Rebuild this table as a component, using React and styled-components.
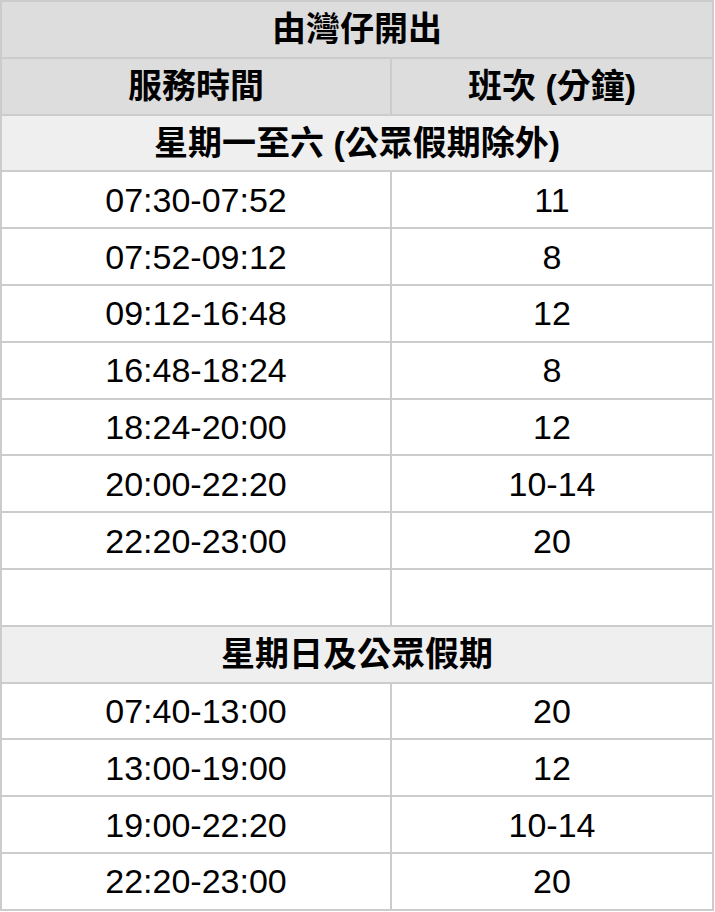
import styled, { createGlobalStyle } from "styled-components";

const GlobalStyle = createGlobalStyle`
  html, body {
    margin: 0;
    padding: 0;
    background: #ffffff;
  }
  body {
    font-family: "Liberation Sans", Arial, "Noto Sans CJK TC", sans-serif;
  }
`;

// 由灣仔開出 時間表
const weekdays = [
  ["07:30-07:52", "11"],
  ["07:52-09:12", "8"],
  ["09:12-16:48", "12"],
  ["16:48-18:24", "8"],
  ["18:24-20:00", "12"],
  ["20:00-22:20", "10-14"],
  ["22:20-23:00", "20"],
];

const holidays = [
  ["07:40-13:00", "20"],
  ["13:00-19:00", "12"],
  ["19:00-22:20", "10-14"],
  ["22:20-23:00", "20"],
];

const App = () => {
  return (
    <>
      <GlobalStyle />
      <Table>
        <colgroup>
          <col style={{ width: "390px" }} />
          <col />
        </colgroup>
        <tbody>
          <tr>
            <HeadCell colSpan={2}>由灣仔開出</HeadCell>
          </tr>
          <tr>
            <HeadCell>服務時間</HeadCell>
            <HeadCell>班次 (分鐘)</HeadCell>
          </tr>
          <tr>
            <SubCell colSpan={2}>星期一至六 (公眾假期除外)</SubCell>
          </tr>
          {weekdays.map(([time, freq]) => (
            <tr key={time}>
              <Cell>{time}</Cell>
              <Cell>{freq}</Cell>
            </tr>
          ))}
          <tr>
            <Cell></Cell>
            <Cell></Cell>
          </tr>
          <tr>
            <SubCell colSpan={2}>星期日及公眾假期</SubCell>
          </tr>
          {holidays.map(([time, freq]) => (
            <tr key={time}>
              <Cell>{time}</Cell>
              <Cell>{freq}</Cell>
            </tr>
          ))}
        </tbody>
      </Table>
    </>
  );
};

// styled-components
const Table = styled.table`
  width: 714px;
  border-collapse: collapse;
  table-layout: fixed;
  font-family: "Liberation Sans", Arial, "Noto Sans CJK TC", sans-serif;
  font-size: 34px;
  color: #000000;
`;
const Cell = styled.td`
  height: 54.8px;
  padding: 0;
  border: 2px solid #cccccc;
  text-align: center;
  vertical-align: middle;
  background: #ffffff;
  line-height: 1;
`;
const HeadCell = styled(Cell)`
  background: #dddddd;
  font-weight: bold;
`;
const SubCell = styled(Cell)`
  background: #efefef;
  font-weight: bold;
`;

export default App;
